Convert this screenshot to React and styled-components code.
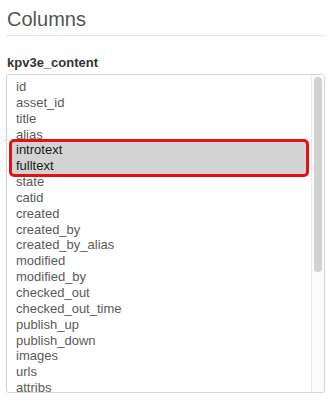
import React from "react";
import styled, { createGlobalStyle } from "styled-components";

const Global = createGlobalStyle`
  body {
    margin: 0;
    background: #ffffff;
    font-family: "Liberation Sans", Arial, sans-serif;
  }
`;

const Page = styled("div")`
  padding: 7px 7px 0 6px;
`;
const Title = styled("h2")`
  margin: 0;
  padding-left: 1px;
  font-size: 20px;
  line-height: 24px;
  font-weight: normal;
  color: #555555;
  padding-bottom: 4px;
  border-bottom: 1px solid #e6e6e6;
`;
const Label = styled("div")`
  margin-top: 19px;
  padding-left: 1px;
  font-size: 13px;
  line-height: 16px;
  font-weight: bold;
  color: #333333;
`;
const Box = styled("div")`
  margin-top: 3px;
  height: 319px;
  border: 1px solid #d6d6d6;
  border-radius: 3px;
  box-shadow: 0 1px 2px rgba(0, 0, 0, 0.08);
  box-sizing: border-box;
  display: flex;
  overflow: hidden;
`;
const List = styled("div")`
  flex: 1;
  min-width: 0;
  overflow: hidden;
  padding-top: 4px;
`;
const Track = styled("div")`
  width: 13px;
  flex: none;
  box-sizing: border-box;
  background: #fbfbfb;
  border-left: 1px solid #e8e8e8;
  padding: 2px 2px 0 2px;
`;
const Thumb = styled("div")`
  height: 195px;
  border-radius: 4px;
  background: #d2d2d2;
`;
const Item = styled("div")`
  padding-left: 9px;
  font-size: 13px;
  line-height: 15.85px;
  color: ${(p) => (p.$selected ? "#1a1a1a" : "#5a5a5a")};
  white-space: nowrap;
`;
const Selected = styled("div")`
  margin: -3px 2px -3px 2px;
  border: 3px solid #e3101a;
  border-radius: 5px;
  background: #d3d3d3;

  ${Item} {
    padding-left: 4px;
  }
`;

const before = ["id", "asset_id", "title", "alias"];
const picked = ["introtext", "fulltext"];
const after = [
  "state", "catid", "created", "created_by", "created_by_alias", "modified",
  "modified_by", "checked_out", "checked_out_time", "publish_up", "publish_down",
  "images", "urls", "attribs", "version", "ordering", "metakey", "metadesc",
];

export default function App() {
  return (
    <Page>
      <Global />
      <Title>Columns</Title>
      <Label>kpv3e_content</Label>
      <Box>
        <List>
          {before.map((c) => <Item key={c}>{c}</Item>)}
          <Selected>
            {picked.map((c) => <Item key={c} $selected>{c}</Item>)}
          </Selected>
          {after.map((c) => <Item key={c}>{c}</Item>)}
        </List>
        <Track>
          <Thumb />
        </Track>
      </Box>
    </Page>
  );
}
